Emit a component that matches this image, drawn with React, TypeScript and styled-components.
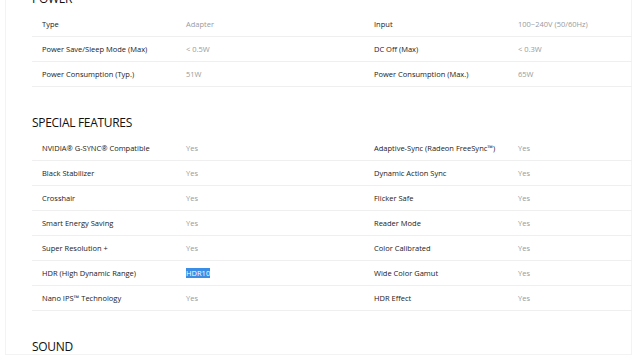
import React from "react";
import styled, { createGlobalStyle } from "styled-components";

interface Spec {
  label: string;
  value: string;
  selected?: boolean;
}

interface Section {
  title: string;
  left: Spec[];
  right: Spec[];
}

const sections: Section[] = [
  {
    title: "POWER",
    left: [
      { label: "Type", value: "Adapter" },
      { label: "Power Save/Sleep Mode (Max)", value: "< 0.5W" },
      { label: "Power Consumption (Typ.)", value: "51W" },
    ],
    right: [
      { label: "Input", value: "100~240V (50/60Hz)" },
      { label: "DC Off (Max)", value: "< 0.3W" },
      { label: "Power Consumption (Max.)", value: "65W" },
    ],
  },
  {
    title: "SPECIAL FEATURES",
    left: [
      { label: "NVIDIA® G-SYNC® Compatible", value: "Yes" },
      { label: "Black Stabilizer", value: "Yes" },
      { label: "Crosshair", value: "Yes" },
      { label: "Smart Energy Saving", value: "Yes" },
      { label: "Super Resolution +", value: "Yes" },
      { label: "HDR (High Dynamic Range)", value: "HDR10", selected: true },
      { label: "Nano IPS™ Technology", value: "Yes" },
    ],
    right: [
      { label: "Adaptive-Sync (Radeon FreeSync™)", value: "Yes" },
      { label: "Dynamic Action Sync", value: "Yes" },
      { label: "Flicker Safe", value: "Yes" },
      { label: "Reader Mode", value: "Yes" },
      { label: "Color Calibrated", value: "Yes" },
      { label: "Wide Color Gamut", value: "Yes" },
      { label: "HDR Effect", value: "Yes" },
    ],
  },
  { title: "SOUND", left: [], right: [] },
];

const GlobalStyle = createGlobalStyle`
  html, body {
    margin: 0;
    padding: 0;
    background: #ffffff;
    overflow: hidden;
  }
  body {
    font-family: "Open Sans", "Noto Sans", sans-serif;
    color: #222;
  }
`;

const Page = styled.div`
  width: 640px;
  height: 360px;
  overflow: hidden;
  background: #fff;
`;

// the page is scrolled a little: the POWER heading sits partly above the top edge
const Frame = styled.div`
  margin: -15px 0 0 5px;
  width: 627px;
  height: 370px;
  border: 1px solid #f3f3f3;
  border-top: none;
  padding-left: 26px;
  box-sizing: border-box;
`;

const SectionBlock = styled.section`
  padding-bottom: 22px;
`;

const Heading = styled.h2`
  margin: 0 0 3px;
  padding-top: 4px;
  height: 20px;
  line-height: 20px;
  font-size: 12px;
  font-weight: 400;
  color: #111;
  letter-spacing: -0.3px;
`;

const Table = styled.div`
  display: grid;
  grid-template-columns: 332px 268px;
  grid-auto-flow: column;
  grid-template-rows: repeat(var(--rows), 25px);
`;

const Row = styled.div`
  display: grid;
  grid-template-columns: 144px 1fr;
  align-items: center;
  padding-left: 10px;
  border-bottom: 1px solid #efefef;
  box-sizing: border-box;
`;

const Label = styled.span`
  font-size: 7.5px;
  color: #222;
  white-space: nowrap;
`;

const Value = styled.span<{ $selected?: boolean }>`
  font-size: 7.5px;
  color: ${(p) => (p.$selected ? "#fff" : "#9a9a9a")};
  white-space: nowrap;
  justify-self: start;
  background: ${(p) => (p.$selected ? "#3a8ee6" : "transparent")};
`;

function SpecRow({ label, value, selected }: Spec) {
  return (
    <Row>
      <Label>{label}</Label>
      <Value $selected={selected}>{value}</Value>
    </Row>
  );
}

export default function App() {
  return (
    <Page>
      <GlobalStyle />
      <Frame>
        {sections.map((s) => (
          <SectionBlock key={s.title}>
            <Heading>{s.title}</Heading>
            {s.left.length > 0 && (
              <Table style={{ ["--rows" as string]: s.left.length } as React.CSSProperties}>
                {s.left.map((r) => (
                  <SpecRow key={r.label} {...r} />
                ))}
                {s.right.map((r) => (
                  <SpecRow key={r.label} {...r} />
                ))}
              </Table>
            )}
          </SectionBlock>
        ))}
      </Frame>
    </Page>
  );
}
